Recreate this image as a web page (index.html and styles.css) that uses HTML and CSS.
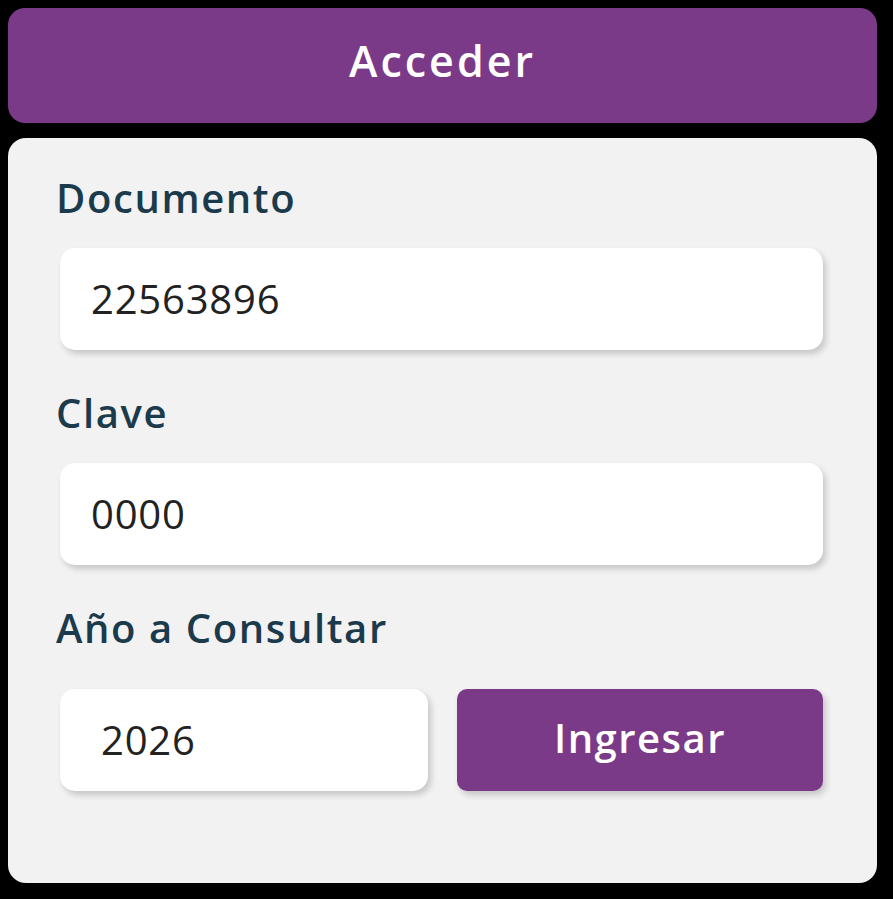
FILE: index.html
```html
<!DOCTYPE html>
<html lang="es">
<head>
<meta charset="utf-8">
<title>Acceder</title>
<link rel="stylesheet" href="styles.css">
</head>
<body>
<div class="page">
  <header class="header">Acceder</header>
  <main class="card">
    <label class="label">Documento</label>
    <div class="field">22563896</div>
    <label class="label">Clave</label>
    <div class="field">0000</div>
    <label class="label">Año a Consultar</label>
    <div class="row">
      <div class="field field-year">2026</div>
      <button class="btn">Ingresar</button>
    </div>
  </main>
</div>
</body>
</html>
```

FILE: styles.css
```css
html, body {
  margin: 0;
  padding: 0;
  background: #000;
}
body {
  padding: 8px 16px 17px 8px;
  font-family: "Open Sans", "DejaVu Sans", sans-serif;
}
.page {
  display: flex;
  flex-direction: column;
  gap: 15px;
}
.header {
  height: 115px;
  box-sizing: border-box;
  padding-bottom: 10px;
  background: #7b3a88;
  border-radius: 17px;
  color: #fff;
  font-size: 43px;
  font-weight: 600;
  letter-spacing: 3px;
  display: flex;
  align-items: center;
  justify-content: center;
}
.card {
  background: #f2f2f2;
  border-radius: 18px;
  padding: 40px 54px 92px 44px;
  display: flex;
  flex-direction: column;
}
.label {
  display: block;
  color: #1b3a4b;
  font-size: 40px;
  font-weight: 600;
  letter-spacing: 1.6px;
  line-height: 40px;
  margin-left: 4px;
}
.field {
  height: 102px;
  box-sizing: border-box;
  padding-bottom: 2px;
  background: #fff;
  border-radius: 15px;
  box-shadow: 3px 4px 6px rgba(0,0,0,0.18);
  margin: 30px 0 43px 8px;
  display: flex;
  align-items: center;
  padding-left: 31px;
  font-size: 40px;
  letter-spacing: 0.8px;
  color: #222;
}
.row {
  display: flex;
  gap: 29px;
  margin-top: 41px;
  margin-left: 8px;
}
.row .field {
  margin: 0;
}
.field-year {
  width: 368px;
  padding-left: 41px;
}
.btn {
  flex: 1;
  height: 102px;
  padding: 0 0 5px 0;
  border: none;
  border-radius: 10px;
  background: #7b3a88;
  color: #fff;
  font-family: inherit;
  font-size: 40px;
  font-weight: 600;
  letter-spacing: 1.5px;
  box-shadow: 3px 4px 6px rgba(0,0,0,0.18);
}
```
